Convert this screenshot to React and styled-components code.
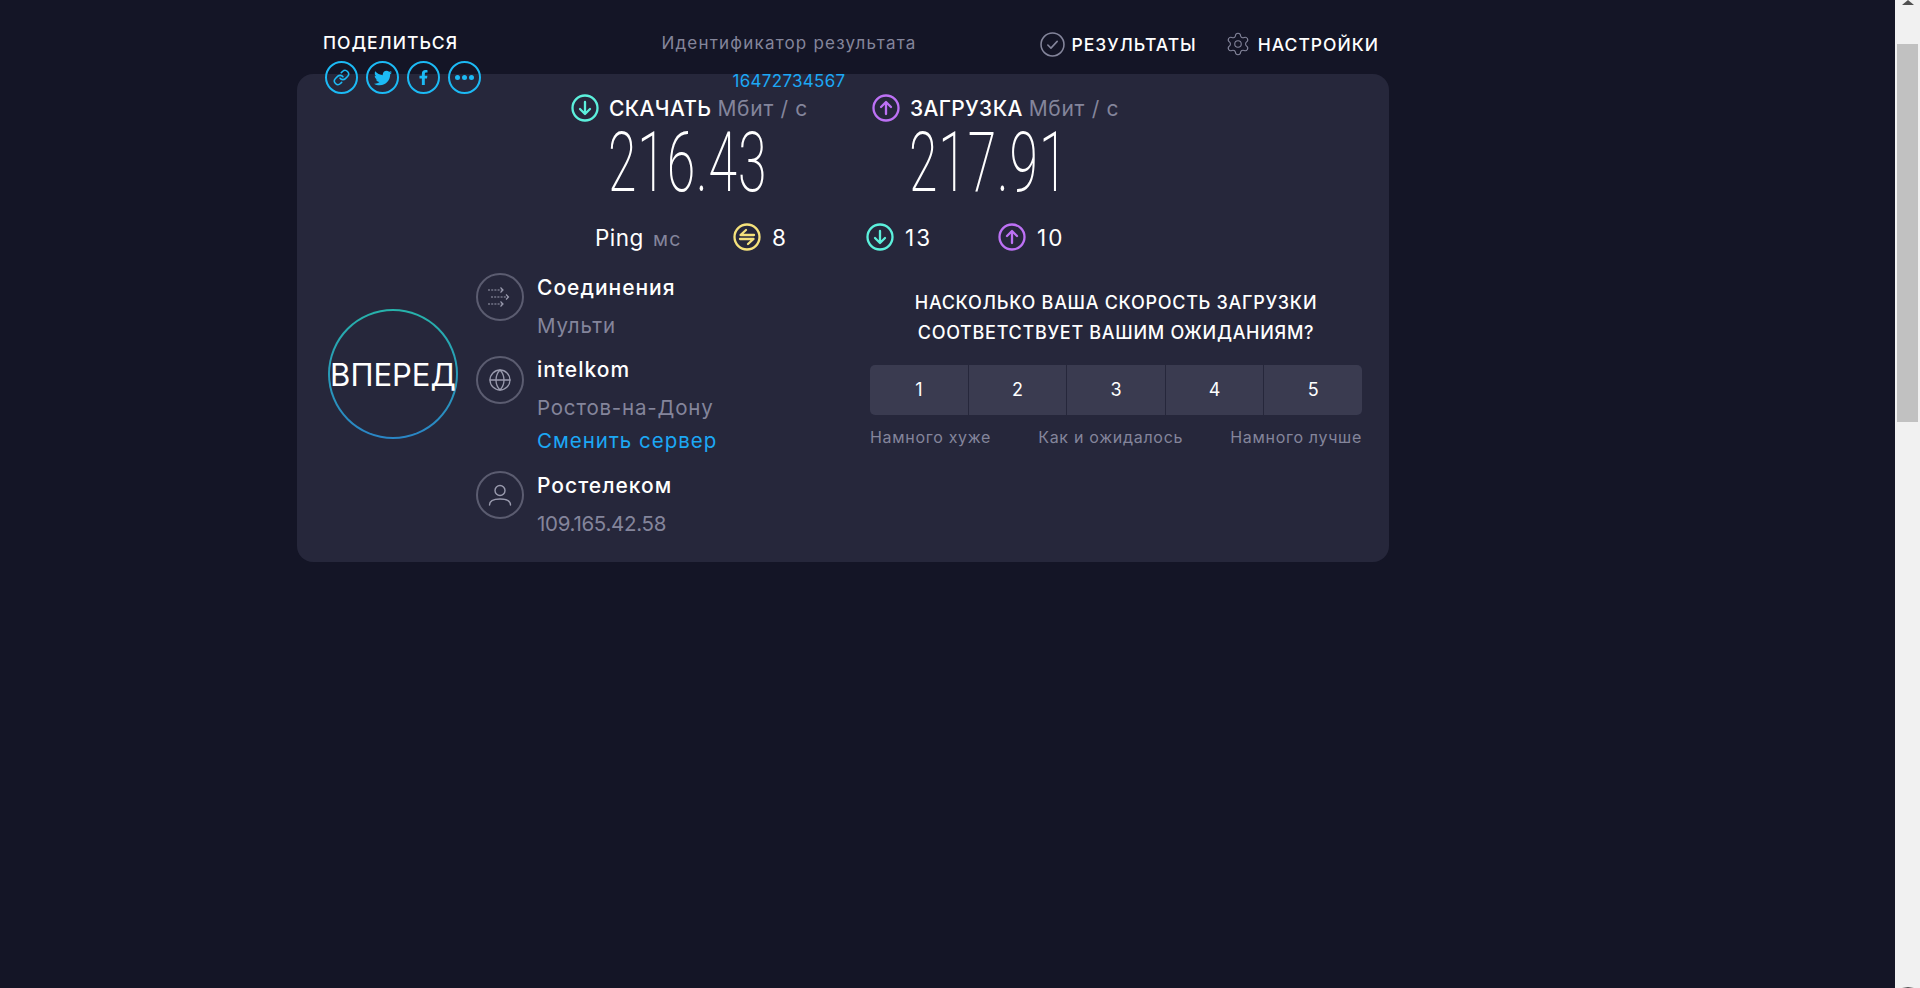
import React from "react"
import styled, { createGlobalStyle } from "styled-components"
import { Link, Globe, Settings } from "lucide-react"
import { FaTwitter, FaFacebookF } from "react-icons/fa"

const GlobalStyle = createGlobalStyle`
  html, body {
    margin: 0;
    padding: 0;
    height: 100%;
    overflow: hidden;
    background: #141526;
  }
  * {
    box-sizing: border-box;
  }
`

const Page = styled.div`
  display: flex;
  height: 988px;
  font-family: Inter, "Noto Sans", sans-serif;
  color: #fff;
`

const Main = styled.div`
  flex: 1;
  padding-left: 297px;
`

const Column = styled.div`
  width: 1092px;
`

const Header = styled.header`
  position: relative;
  z-index: 1;
  display: flex;
  height: 74px;
  padding: 33px 10px 0 26px;
`

const Share = styled.div`
  width: 300px;
`

const ShareTitle = styled.div`
  font-size: 17.5px;
  line-height: 20px;
  font-weight: 500;
  letter-spacing: 1px;
`

const ShareIcons = styled.div`
  display: flex;
  gap: 8px;
  margin: 8px 0 0 2px;
`

const ShareIcon = styled.div`
  display: flex;
  align-items: center;
  justify-content: center;
  width: 33px;
  height: 33px;
  border: 2px solid #1cbaf5;
  border-radius: 50%;
  color: #1cbaf5;
`

const Dots = styled.div`
  display: flex;
  gap: 2px;
`

const Dot = styled.span`
  width: 5px;
  height: 5px;
  border-radius: 50%;
  background: #1cbaf5;
`

const ResultId = styled.div`
  width: 332px;
  text-align: center;
`

const ResultLabel = styled.div`
  font-size: 17px;
  line-height: 20px;
  color: #84859b;
  letter-spacing: 1.2px;
  white-space: nowrap;
`

const ResultNumber = styled.div`
  margin-top: 18px;
  font-size: 17px;
  line-height: 20px;
  color: #1ca8f5;
  letter-spacing: 0.3px;
`

const Nav = styled.nav`
  display: flex;
  gap: 28px;
  margin-left: auto;
  height: 24px;
  margin-top: -1px;
`

const NavItem = styled.div`
  display: flex;
  align-items: center;
  gap: 7px;
  font-size: 17.5px;
  font-weight: 500;
  letter-spacing: 1px;
  color: #fff;
  svg {
    color: #84859b;
  }
`

const Card = styled.main`
  background: #26273b;
  border-radius: 16px;
  padding: 20px 0 26px;
`

const SpeedRow = styled.div`
  display: flex;
  padding-left: 274px;
`

const SpeedBlock = styled.div`
  width: 301px;
`

const SpeedLabel = styled.div`
  display: flex;
  align-items: center;
  gap: 10px;
  height: 28px;
  font-size: 21px;
  font-weight: 500;
  letter-spacing: 0.35px;
`

const Unit = styled.span`
  margin-left: -4px;
  font-weight: 400;
  color: #84859b;
  letter-spacing: 0.7px;
`

const SpeedValue = styled.div`
  margin: 5px 0 0 37px;
  height: 70px;
  font-family: Roboto, sans-serif;
  font-size: 84px;
  line-height: 72px;
  font-weight: 200;
  letter-spacing: 1.5px;
  white-space: nowrap;
  transform: scaleX(0.615);
  transform-origin: left center;
`

const PingRow = styled.div`
  display: flex;
  align-items: center;
  height: 30px;
  margin-top: 25px;
  padding-left: 298px;
  font-size: 22.5px;
`

const PingLabel = styled.div`
  width: 138px;
  letter-spacing: 0.5px;
  span {
    margin-left: 9px;
    color: #84859b;
    font-size: 19.5px;
    letter-spacing: 1.2px;
  }
`

const PingCell = styled.div`
  display: flex;
  align-items: center;
  gap: 11px;
  width: ${(p) => p.$width}px;
  font-size: 22.5px;
  letter-spacing: 2px;
`

const Bottom = styled.div`
  display: flex;
  margin-top: 21px;
  padding-left: 31px;
`

const GoButton = styled.div`
  display: flex;
  flex: none;
  align-items: center;
  justify-content: center;
  width: 130px;
  height: 130px;
  margin: 36px 18px 0 0;
  border: 2px solid transparent;
  border-radius: 50%;
  background: linear-gradient(#26273b, #26273b) padding-box,
    linear-gradient(#27b3ab, #2a85c6) border-box;
  font-size: 31px;
  white-space: nowrap;
`

const Servers = styled.div`
  display: flex;
  flex-direction: column;
  gap: 18px;
  width: 394px;
`

const ServerRow = styled.div`
  display: flex;
  gap: 13px;
`

const ServerIcon = styled.div`
  display: flex;
  flex: none;
  align-items: center;
  justify-content: center;
  width: 48px;
  height: 48px;
  border: 2px solid #5b5c70;
  border-radius: 50%;
  color: #9a9bae;
`

const ServerText = styled.div`
  padding-top: ${(p) => p.$top ?? 3}px;
`

const ServerTitle = styled.div`
  font-size: 21px;
  line-height: 24px;
  font-weight: 500;
  letter-spacing: 1px;
`

const ServerSub = styled.div`
  margin-top: 14px;
  font-size: 20.5px;
  line-height: 24px;
  color: #84859b;
  letter-spacing: ${(p) => (p.$tight ? "-0.3px" : "0.8px")};
`

const ChangeServer = styled.div`
  margin-top: 9px;
  font-size: 20.5px;
  line-height: 24px;
  color: #1ca8f5;
  letter-spacing: 1px;
`

const Survey = styled.section`
  width: 492px;
  margin-top: 15px;
`

const SurveyTitle = styled.div`
  font-size: 18px;
  line-height: 30px;
  font-weight: 500;
  letter-spacing: 0.7px;
  text-align: center;
`

const Scale = styled.div`
  display: flex;
  gap: 1px;
  height: 50px;
  margin-top: 17px;
  border-radius: 5px;
  overflow: hidden;
`

const ScaleButton = styled.div`
  display: flex;
  flex: 1;
  align-items: center;
  justify-content: center;
  padding-bottom: 2px;
  background: #3a3b50;
  font-size: 18px;
`

const ScaleLabels = styled.div`
  display: flex;
  justify-content: space-between;
  margin-top: 12px;
  font-size: 16px;
  line-height: 20px;
  letter-spacing: 0.7px;
  color: #84859b;
`

const Scrollbar = styled.aside`
  display: flex;
  flex-direction: column;
  align-items: center;
  width: 25px;
  height: 988px;
  background: #f1f1f1;
`

const ArrowUp = styled.div`
  width: 0;
  height: 0;
  border-left: 6px solid transparent;
  border-right: 6px solid transparent;
  border-bottom: 5px solid #505050;
`

const Thumb = styled.div`
  width: 21px;
  height: 378px;
  margin-top: 39px;
  background: #c1c1c1;
`

const ArrowDownMark = styled.div`
  width: 0;
  height: 0;
  margin-top: auto;
  border-left: 6px solid transparent;
  border-right: 6px solid transparent;
  border-top: 1px solid #505050;
`

const Dir = ({ up, color }) => (
  <svg width="28" height="28" viewBox="0 0 28 28" fill="none" stroke={color} strokeWidth="2.3">
    <circle cx="14" cy="14" r="12.5" />
    {up ? (
      <path d="M14 20V8.5M9 13l5-5 5 5" strokeLinecap="round" strokeLinejoin="round" />
    ) : (
      <path d="M14 8v11.5M9 15l5 5 5-5" strokeLinecap="round" strokeLinejoin="round" />
    )}
  </svg>
)

const PingIcon = () => (
  <svg width="28" height="28" viewBox="0 0 28 28" fill="none" stroke="#f5e27c" strokeWidth="2.3">
    <circle cx="14" cy="14" r="12.5" />
    <path d="M21 12H7.5L13 7M7 16h13.5L15 21" strokeLinecap="round" strokeLinejoin="round" />
  </svg>
)

const ConnectionsIcon = () => (
  <svg width="24" height="20" viewBox="0 0 24 20" fill="none" stroke="currentColor" strokeWidth="1.2">
    <path d="M0 3h14" strokeDasharray="2 1.2" />
    <path d="M12.5 0.5L15 3l-2.5 2.5" />
    <path d="M3 10h17" strokeDasharray="2 1.2" />
    <path d="M18 7.5L20.5 10 18 12.5" />
    <path d="M0 17h14" strokeDasharray="2 1.2" />
    <path d="M12.5 14.5L15 17l-2.5 2.5" />
  </svg>
)

const UserIcon = () => (
  <svg width="24" height="24" viewBox="0 0 24 24" fill="none" stroke="currentColor" strokeWidth="1.4">
    <circle cx="12" cy="7.5" r="5" />
    <path d="M1.5 22c0-4 4-6 10.5-6s10.5 2 10.5 6" strokeLinecap="round" />
  </svg>
)

const CheckIcon = () => (
  <svg width="25" height="25" viewBox="0 0 24 24" fill="none" stroke="#84859b" strokeWidth="1.5">
    <circle cx="12" cy="12" r="11" />
    <path d="M7.5 12.5l3 3 6-6.5" strokeLinecap="round" strokeLinejoin="round" />
  </svg>
)

const App = () => {
  return (
    <Page>
      <GlobalStyle />
      <Main>
        <Column>
          <Header>
            <Share>
              <ShareTitle>ПОДЕЛИТЬСЯ</ShareTitle>
              <ShareIcons>
                <ShareIcon>
                  <Link size={17} strokeWidth={2.2} />
                </ShareIcon>
                <ShareIcon>
                  <FaTwitter size={18} />
                </ShareIcon>
                <ShareIcon>
                  <FaFacebookF size={15} />
                </ShareIcon>
                <ShareIcon>
                  <Dots>
                    <Dot />
                    <Dot />
                    <Dot />
                  </Dots>
                </ShareIcon>
              </ShareIcons>
            </Share>
            <ResultId>
              <ResultLabel>Идентификатор результата</ResultLabel>
              <ResultNumber>16472734567</ResultNumber>
            </ResultId>
            <Nav>
              <NavItem>
                <CheckIcon />
                РЕЗУЛЬТАТЫ
              </NavItem>
              <NavItem>
                <Settings size={26} strokeWidth={1} />
                НАСТРОЙКИ
              </NavItem>
            </Nav>
          </Header>
          <Card>
            <SpeedRow>
              <SpeedBlock>
                <SpeedLabel>
                  <Dir color="#5cf0dc" />
                  СКАЧАТЬ <Unit>Мбит / с</Unit>
                </SpeedLabel>
                <SpeedValue>216.43</SpeedValue>
              </SpeedBlock>
              <SpeedBlock>
                <SpeedLabel>
                  <Dir up color="#bd71f5" />
                  ЗАГРУЗКА <Unit>Мбит / с</Unit>
                </SpeedLabel>
                <SpeedValue>217.91</SpeedValue>
              </SpeedBlock>
            </SpeedRow>
            <PingRow>
              <PingLabel>
                Ping<span>мс</span>
              </PingLabel>
              <PingCell $width={133}>
                <PingIcon />8
              </PingCell>
              <PingCell $width={132}>
                <Dir color="#5cf0dc" />
                13
              </PingCell>
              <PingCell $width={100}>
                <Dir up color="#bd71f5" />
                10
              </PingCell>
            </PingRow>
            <Bottom>
              <GoButton>ВПЕРЕД</GoButton>
              <Servers>
                <ServerRow>
                  <ServerIcon>
                    <ConnectionsIcon />
                  </ServerIcon>
                  <ServerText>
                    <ServerTitle>Соединения</ServerTitle>
                    <ServerSub>Мульти</ServerSub>
                  </ServerText>
                </ServerRow>
                <ServerRow>
                  <ServerIcon>
                    <Globe size={24} strokeWidth={1.3} />
                  </ServerIcon>
                  <ServerText $top={2}>
                    <ServerTitle>intelkom</ServerTitle>
                    <ServerSub>Ростов-на-Дону</ServerSub>
                    <ChangeServer>Сменить сервер</ChangeServer>
                  </ServerText>
                </ServerRow>
                <ServerRow>
                  <ServerIcon>
                    <UserIcon />
                  </ServerIcon>
                  <ServerText>
                    <ServerTitle>Ростелеком</ServerTitle>
                    <ServerSub $tight>109.165.42.58</ServerSub>
                  </ServerText>
                </ServerRow>
              </Servers>
              <Survey>
                <SurveyTitle>
                  НАСКОЛЬКО ВАША СКОРОСТЬ ЗАГРУЗКИ
                  <br />
                  СООТВЕТСТВУЕТ ВАШИМ ОЖИДАНИЯМ?
                </SurveyTitle>
                <Scale>
                  {[1, 2, 3, 4, 5].map((n) => (
                    <ScaleButton key={n}>{n}</ScaleButton>
                  ))}
                </Scale>
                <ScaleLabels>
                  <span>Намного хуже</span>
                  <span>Как и ожидалось</span>
                  <span>Намного лучше</span>
                </ScaleLabels>
              </Survey>
            </Bottom>
          </Card>
        </Column>
      </Main>
      <Scrollbar>
        <ArrowUp />
        <Thumb />
        <ArrowDownMark />
      </Scrollbar>
    </Page>
  )
}

export default App
